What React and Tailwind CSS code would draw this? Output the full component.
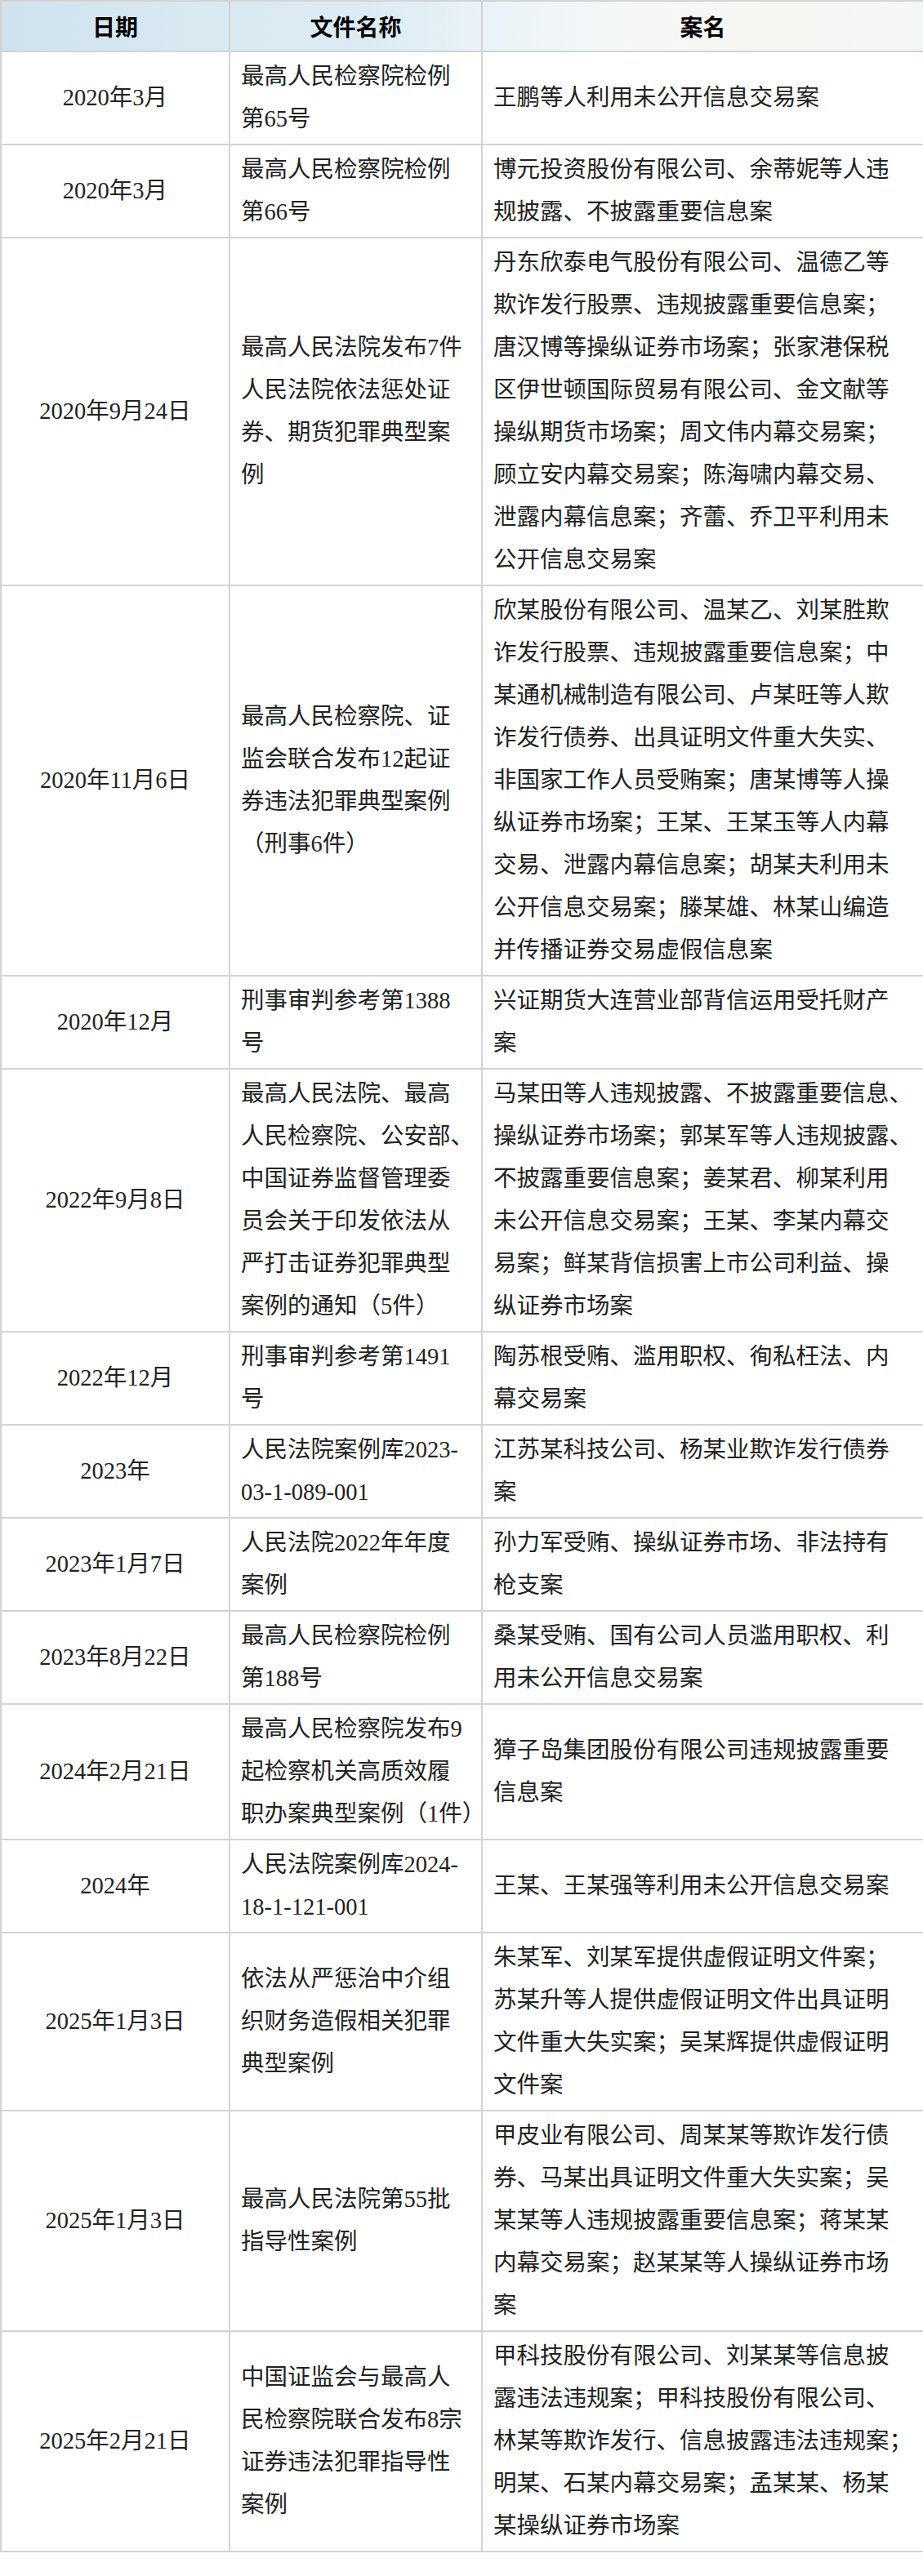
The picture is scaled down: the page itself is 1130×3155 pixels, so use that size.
import React from 'react';

const rows = [
  { date: '2020年3月', doc: ['最高人民检察院检例', '第65号'], cases: ['王鹏等人利用未公开信息交易案'] },
  { date: '2020年3月', doc: ['最高人民检察院检例', '第66号'], cases: ['博元投资股份有限公司、余蒂妮等人违', '规披露、不披露重要信息案'] },
  {
    date: '2020年9月24日',
    doc: ['最高人民法院发布7件', '人民法院依法惩处证', '券、期货犯罪典型案', '例'],
    cases: [
      '丹东欣泰电气股份有限公司、温德乙等',
      '欺诈发行股票、违规披露重要信息案；',
      '唐汉博等操纵证券市场案；张家港保税',
      '区伊世顿国际贸易有限公司、金文献等',
      '操纵期货市场案；周文伟内幕交易案；',
      '顾立安内幕交易案；陈海啸内幕交易、',
      '泄露内幕信息案；齐蕾、乔卫平利用未',
      '公开信息交易案',
    ],
  },
  {
    date: '2020年11月6日',
    doc: ['最高人民检察院、证', '监会联合发布12起证', '券违法犯罪典型案例', '（刑事6件）'],
    cases: [
      '欣某股份有限公司、温某乙、刘某胜欺',
      '诈发行股票、违规披露重要信息案；中',
      '某通机械制造有限公司、卢某旺等人欺',
      '诈发行债券、出具证明文件重大失实、',
      '非国家工作人员受贿案；唐某博等人操',
      '纵证券市场案；王某、王某玉等人内幕',
      '交易、泄露内幕信息案；胡某夫利用未',
      '公开信息交易案；滕某雄、林某山编造',
      '并传播证券交易虚假信息案',
    ],
  },
  { date: '2020年12月', doc: ['刑事审判参考第1388', '号'], cases: ['兴证期货大连营业部背信运用受托财产', '案'] },
  {
    date: '2022年9月8日',
    doc: ['最高人民法院、最高', '人民检察院、公安部、', '中国证券监督管理委', '员会关于印发依法从', '严打击证券犯罪典型', '案例的通知（5件）'],
    cases: [
      '马某田等人违规披露、不披露重要信息、',
      '操纵证券市场案；郭某军等人违规披露、',
      '不披露重要信息案；姜某君、柳某利用',
      '未公开信息交易案；王某、李某内幕交',
      '易案；鲜某背信损害上市公司利益、操',
      '纵证券市场案',
    ],
  },
  { date: '2022年12月', doc: ['刑事审判参考第1491', '号'], cases: ['陶苏根受贿、滥用职权、徇私枉法、内', '幕交易案'] },
  { date: '2023年', doc: ['人民法院案例库2023-', '03-1-089-001'], cases: ['江苏某科技公司、杨某业欺诈发行债券', '案'] },
  { date: '2023年1月7日', doc: ['人民法院2022年年度', '案例'], cases: ['孙力军受贿、操纵证券市场、非法持有', '枪支案'] },
  { date: '2023年8月22日', doc: ['最高人民检察院检例', '第188号'], cases: ['桑某受贿、国有公司人员滥用职权、利', '用未公开信息交易案'] },
  {
    date: '2024年2月21日',
    doc: ['最高人民检察院发布9', '起检察机关高质效履', '职办案典型案例（1件）'],
    cases: ['獐子岛集团股份有限公司违规披露重要', '信息案'],
  },
  { date: '2024年', doc: ['人民法院案例库2024-', '18-1-121-001'], cases: ['王某、王某强等利用未公开信息交易案'] },
  {
    date: '2025年1月3日',
    doc: ['依法从严惩治中介组', '织财务造假相关犯罪', '典型案例'],
    cases: ['朱某军、刘某军提供虚假证明文件案；', '苏某升等人提供虚假证明文件出具证明', '文件重大失实案；吴某辉提供虚假证明', '文件案'],
  },
  {
    date: '2025年1月3日',
    doc: ['最高人民法院第55批', '指导性案例'],
    cases: ['甲皮业有限公司、周某某等欺诈发行债', '券、马某出具证明文件重大失实案；吴', '某某等人违规披露重要信息案；蒋某某', '内幕交易案；赵某某等人操纵证券市场', '案'],
  },
  {
    date: '2025年2月21日',
    doc: ['中国证监会与最高人', '民检察院联合发布8宗', '证券违法犯罪指导性', '案例'],
    cases: ['甲科技股份有限公司、刘某某等信息披', '露违法违规案；甲科技股份有限公司、', '林某等欺诈发行、信息披露违法违规案；', '明某、石某内幕交易案；孟某某、杨某', '某操纵证券市场案'],
  },
];

const Lines = ({ lines }) => (
  <>
    {lines.map((l, i) => (
      <div key={i} className="whitespace-nowrap">{l}</div>
    ))}
  </>
);

const cell = 'border-2 border-[#d3d3d3] px-[13px] py-[4px] align-middle';

export default function App() {
  return (
    <div className="bg-white pb-[18px]">
      <table
        className="w-[1130px] table-fixed border-collapse text-[28.5px] leading-[52px] text-[#222]"
        style={{ fontFamily: '"Liberation Serif", "Noto Sans CJK SC", serif' }}
      >
        <colgroup>
          <col className="w-[280px]" />
          <col className="w-[309px]" />
          <col className="w-[541px]" />
        </colgroup>
        <thead>
          <tr className="bg-[linear-gradient(90deg,#cfe2ee_0%,#d9e9f2_22%,#dcebf3_40%,#e9f2f7_52%,#f4f7f8_66%,#f8f6f2_85%,#f3f6f8_100%)]">
            {['日期', '文件名称', '案名'].map((h) => (
              <th
                key={h}
                className="h-[62px] border-2 border-[#d3d3d3] p-0 text-center align-middle text-[28px] font-bold text-black"
                style={{ fontFamily: '"Noto Sans CJK SC", sans-serif' }}
              >
                {h}
              </th>
            ))}
          </tr>
        </thead>
        <tbody>
          {rows.map((r, i) => (
            <tr key={i}>
              <td className={`${cell} text-center`}>{r.date}</td>
              <td className={cell}><Lines lines={r.doc} /></td>
              <td className={cell}><Lines lines={r.cases} /></td>
            </tr>
          ))}
        </tbody>
      </table>
    </div>
  );
}
